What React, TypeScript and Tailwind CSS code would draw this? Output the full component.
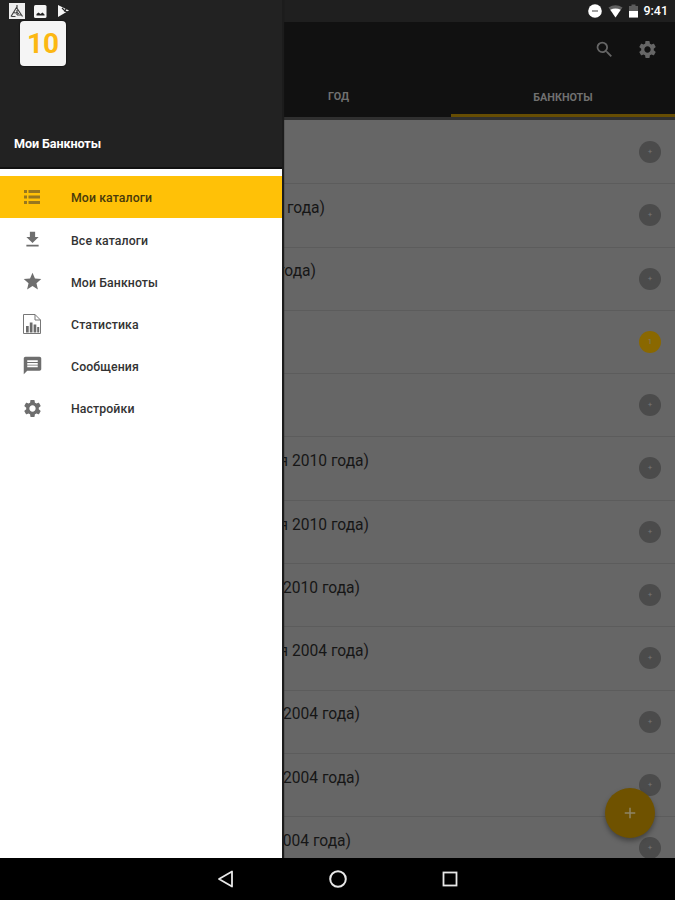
import {
  MdFileDownload,
  MdStar,
  MdMessage,
  MdSettings,
  MdSearch,
  MdAdd,
} from "react-icons/md";
import type { ReactNode } from "react";

function ListIcon() {
  return (
    <svg width="18" height="16" viewBox="0 0 18 16" fill="currentColor">
      <path d="M1 1h3v3H1zM1 6.500h3v3H1zM1 12h3v3H1z" />
      <path d="M5.500 1H17v3H5.500zM5.500 6.500H17v3H5.500zM5.500 12H17v3H5.500z" />
    </svg>
  );
}

function ReportIcon() {
  return (
    <svg width="20" height="22" viewBox="0 0 20 22" fill="none">
      <path d="M1.5 1.5h11.5l5.5 5.5v13.500h-17z" stroke="#777" strokeWidth="1" />
      <path d="M13 1.500v5.500h5.500" stroke="#777" strokeWidth="1" />
      <path d="M4 13h2.700v6.500h-2.700zM7.800 9.500h2.700v10h-2.700zM11.600 11.500h2.700v8h-2.700zM15.200 14h2v5.500h-2z" fill="#6b6b6b" />
    </svg>
  );
}

const MENU: { label: string; icon: ReactNode }[] = [
  { label: "Мои каталоги", icon: <ListIcon /> },
  { label: "Все каталоги", icon: <MdFileDownload size={21} /> },
  { label: "Мои Банкноты", icon: <MdStar size={21} /> },
  { label: "Статистика", icon: <ReportIcon /> },
  { label: "Сообщения", icon: <MdMessage size={21} /> },
  { label: "Настройки", icon: <MdSettings size={21} /> },
];

// Each title is hidden under the drawer up to its last words
const ROWS = [
  { title: "", width: "w-0" },
  { title: "года)", width: "w-[43px]" },
  { title: "года)", width: "w-[34px]" },
  { title: "", width: "w-0", active: true },
  { title: "", width: "w-0" },
  { title: "я 2010 года)", width: "w-[87px]" },
  { title: "я 2010 года)", width: "w-[87px]" },
  { title: "2010 года)", width: "w-[78px]" },
  { title: "я 2004 года)", width: "w-[87px]" },
  { title: "2004 года)", width: "w-[78px]" },
  { title: "2004 года)", width: "w-[78px]" },
  { title: "2004 года)", width: "w-[69px]" },
];

function StatusBar() {
  return (
    <div className="absolute inset-x-0 top-0 z-20 flex h-[22px] items-center justify-between pl-[9px] pr-[7px]">
      <div className="flex items-center">
        <svg width="16" height="16" viewBox="0 0 16 16">
          <path d="M0 0h16v16H0z" fill="#eee" />
          <path
            d="M2 13.500L7.500 4.500L13.500 13.500M4 9.500l6 1M8 2v3M2.500 13.500h4M8 12h4M8 7v5"
            stroke="#444"
            strokeWidth="1.200"
            fill="none"
          />
        </svg>
        <svg width="13" height="13" viewBox="0 0 13 13" className="ml-[9px]">
          <rect width="12.500" height="13" rx="1.500" fill="#f5f5f5" />
          <path d="M2.500 10.500v-1.500l2-1.500 2 1.500 2-1.500 2 2v1z" fill="#222" />
        </svg>
        <svg width="13" height="14" viewBox="0 0 13 14" className="ml-[10px]">
          <path d="M1 1l11 5.500L1 13z" fill="#f5f5f5" />
          <path d="M5 4l3 3 2-4M7 7l4 1" stroke="#222" strokeWidth="1.200" fill="none" />
        </svg>
      </div>
      <div className="flex items-center">
        <svg width="14" height="14" viewBox="0 0 14 14">
          <circle cx="7" cy="7" r="6.800" fill="#fff" />
          <path d="M4 6.200h6v1.600H4z" fill="#888" />
        </svg>
        <svg width="15" height="13" viewBox="0 0 15 13" className="ml-[6px]">
          <path d="M.5 2.500Q7.500-2 14.500 2.500L7.500 12.500z" fill="#606060" />
          <path d="M2.300 4.800Q7.500 2 12.700 4.800L7.500 12.500z" fill="#fff" />
        </svg>
        <svg width="9" height="14" viewBox="0 0 9 14" className="ml-[6px]">
          <path d="M0 2h2.500V.5h4V2H9v11.500H0z" fill="#5c5c5c" />
          <path d="M0 7h9v6.500H0z" fill="#fff" />
        </svg>
        <span className="ml-[5px] pt-px text-[12.5px] leading-none font-medium text-white">9:41</span>
      </div>
    </div>
  );
}

function Drawer() {
  return (
    <aside className="z-10 flex w-[282px] shrink-0 flex-col bg-white shadow-[2px_0_1px_#1c1c1c]">
      <header className="flex h-[169px] flex-col justify-between border-b-2 border-[#111] bg-[#222] pt-[21px] pb-[14px]">
        <div className="ml-5 flex h-[45px] w-[46px] items-center justify-center rounded-[4px] bg-[#f5f5f5] text-[28px] font-bold text-[#fcb813] shadow-[0_0_2px_#000]">
          10
        </div>
        <div className="pl-[14px] text-[12.6px] leading-[18px] font-bold tracking-[-0.1px] text-white">
          Мои Банкноты
        </div>
      </header>
      <nav className="pt-[7px]">
        {MENU.map((item, i) => (
          <div
            key={item.label}
            className={`flex h-[42.2px] items-center ${i === 0 ? "bg-[#ffc107]" : ""}`}
          >
            <span className={`flex w-[64px] justify-center ${i === 0 ? "text-[#97771f]" : "text-[#6e6e6e]"}`}>
              {item.icon}
            </span>
            <span
              className={`ml-[7px] pt-[3px] text-[12.3px] font-medium tracking-[0.1px] ${
                i === 0 ? "text-[#493a0c]" : "text-[#333]"
              }`}
            >
              {item.label}
            </span>
          </div>
        ))}
      </nav>
    </aside>
  );
}

function Catalog() {
  return (
    <main className="flex min-w-0 flex-1 flex-col overflow-hidden bg-[#666]">
      <div className="h-[22px] shrink-0 bg-[#1f1f1f]" />
      <div className="flex h-[55px] shrink-0 items-center justify-end gap-[22px] bg-[#111] pr-[17px] text-[#666]">
        <MdSearch size={21} />
        <MdSettings size={21} />
      </div>
      <div className="flex h-[43px] shrink-0 border-b-[3px] border-[#303030] bg-[#111] text-[10.8px] font-bold text-[#707070]">
        <div className="flex w-[169px] items-center pl-[46px] pt-px">ГОД</div>
        <div className="flex flex-1 items-center justify-center border-b-[3px] border-[#664d03] pt-[5px]">
          БАНКНОТЫ
        </div>
      </div>
      <div className="pt-px">
        {ROWS.map((row, i) => (
          <div
            key={i}
            className="flex h-[63.3px] justify-between border-b border-[#5c5c5c] pr-[14px]"
          >
            <div
              className={`flex h-[49px] items-center justify-end overflow-hidden text-[15.6px] whitespace-nowrap text-[#161616] ${row.width}`}
            >
              {row.title}
            </div>
            <div
              className={`mt-5 flex size-[22px] items-center justify-center rounded-full text-[8px] text-[#777] ${
                row.active ? "bg-[#8a6800]" : "bg-[#4b4b4b]"
              }`}
            >
              {row.active ? "1" : "+"}
            </div>
          </div>
        ))}
      </div>
    </main>
  );
}

export default function App() {
  return (
    <div className="relative flex h-[900px] w-[675px] flex-col overflow-hidden bg-black font-[Roboto,sans-serif]">
      <div className="flex h-[858px] shrink-0 overflow-hidden">
        <Drawer />
        <Catalog />
      </div>
      <div className="flex flex-1 items-center justify-center gap-[94px]">
        <svg width="18" height="18" viewBox="0 0 18 18" fill="none" stroke="#e8e8e8" strokeWidth="1.800">
          <path d="M15 1.500v15L2 9z" strokeLinejoin="round" />
        </svg>
        <svg width="18" height="18" viewBox="0 0 18 18" fill="none" stroke="#e8e8e8" strokeWidth="2">
          <circle cx="9" cy="9" r="7.800" />
        </svg>
        <svg width="18" height="18" viewBox="0 0 18 18" fill="none" stroke="#e8e8e8" strokeWidth="1.800">
          <rect x="2.500" y="2.500" width="13" height="13" />
        </svg>
      </div>
      <button className="absolute top-[788px] left-[605px] flex size-[50px] items-center justify-center rounded-full bg-[#6f5200] text-[#8f8566] shadow-[0_3px_5px_rgba(0,0,0,0.35)]">
        <MdAdd size={18} />
      </button>
      <StatusBar />
    </div>
  );
}
